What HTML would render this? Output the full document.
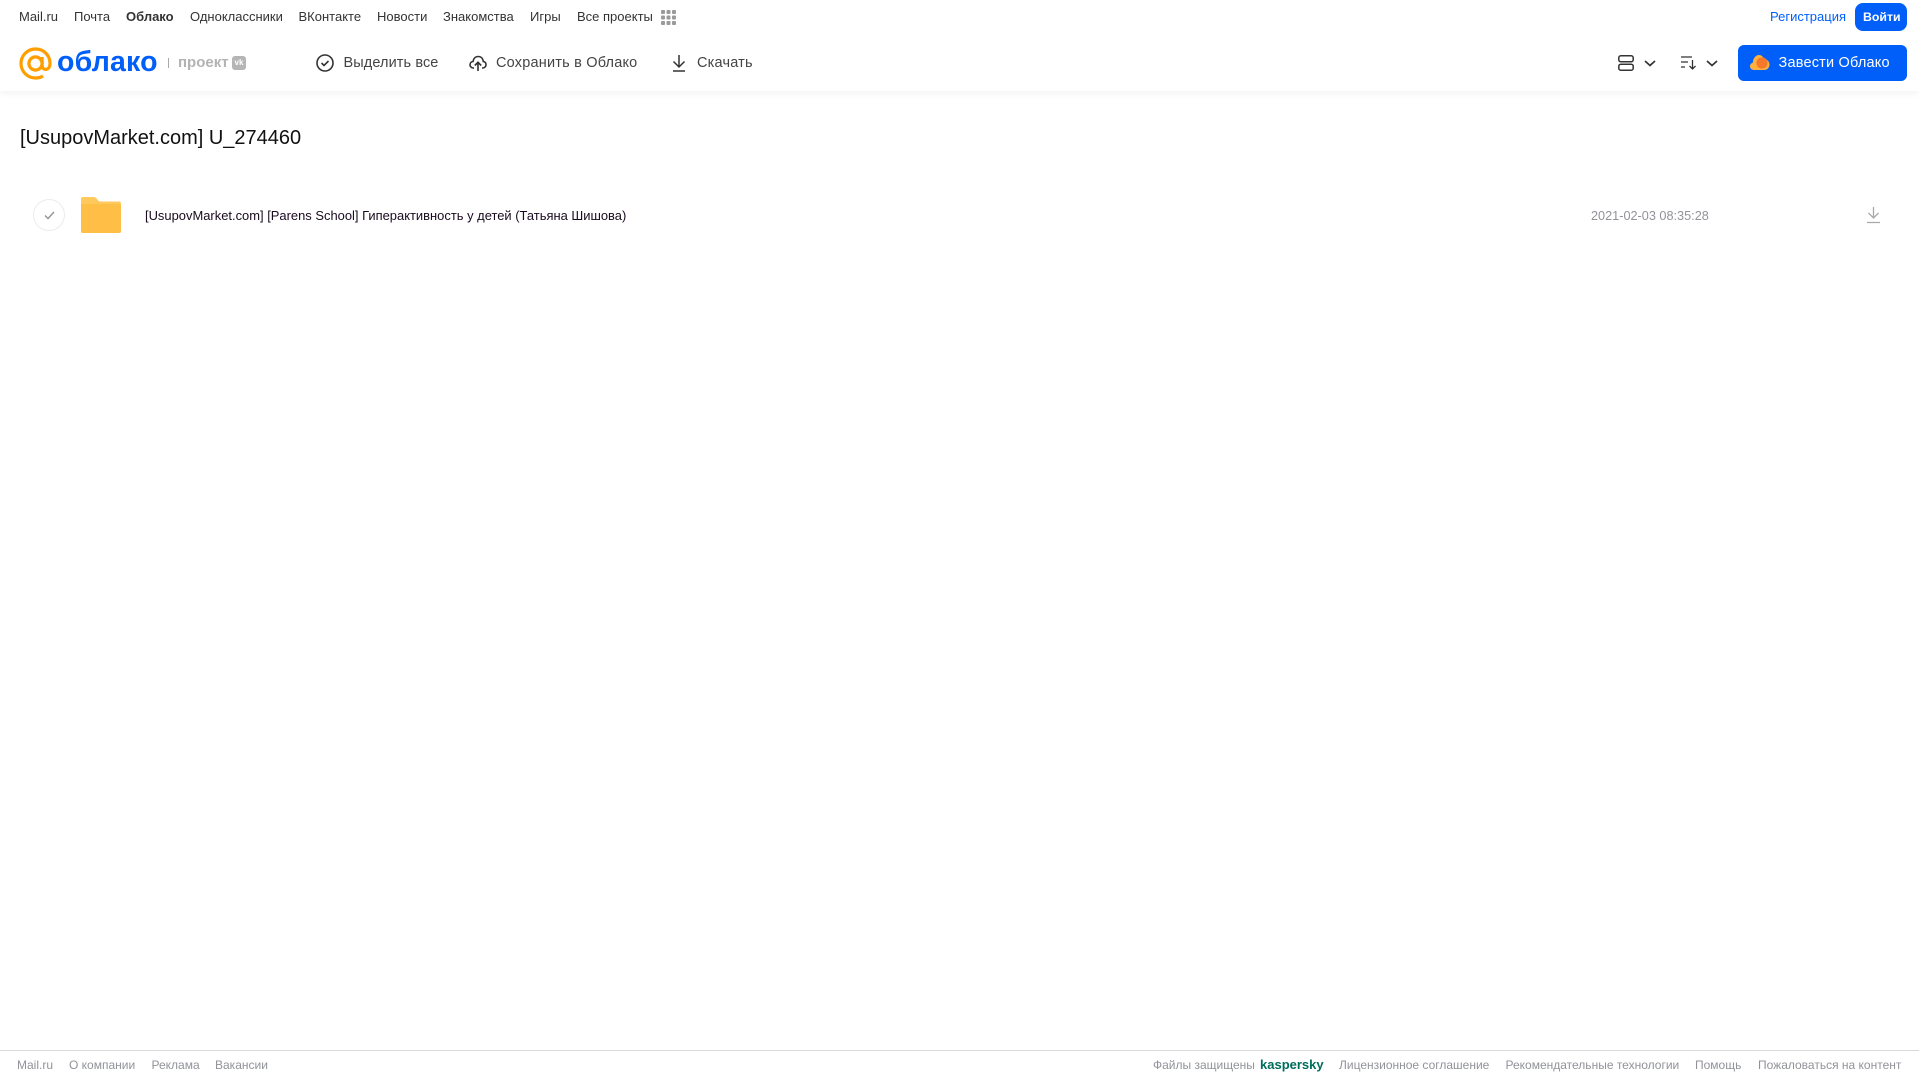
<!DOCTYPE html>
<html lang="ru"><head><meta charset="utf-8"><title>Облако</title>
<style>
html,body{margin:0;padding:0;background:#fff;width:1919px;height:1079px;overflow:hidden}
body{font-family:"Liberation Sans",sans-serif;position:relative}
.t{position:absolute;white-space:nowrap;line-height:20px;height:20px}
.n{top:7px;font-size:13px;color:#333}
.b{top:53px;font-size:14.5px;color:#444;letter-spacing:.1px}
.f{top:1055px;font-size:12px;color:#919399}
svg{position:absolute;overflow:visible}
</style></head><body>
<div style="position:absolute;left:0;top:0;width:1919px;height:91px;background:#fff;box-shadow:0 1px 8px rgba(0,0,0,.07)"></div>
<span class="t n" style="left:19px">Mail.ru</span>
<span class="t n" style="left:74px">Почта</span>
<span class="t n" style="left:126px;font-weight:bold">Облако</span>
<span class="t n" style="left:190px">Одноклассники</span>
<span class="t n" style="left:298.500px">ВКонтакте</span>
<span class="t n" style="left:377px">Новости</span>
<span class="t n" style="left:443px">Знакомства</span>
<span class="t n" style="left:530px">Игры</span>
<span class="t n" style="left:577px">Все проекты</span>
<svg style="left:661px;top:10px" width="15" height="15" fill="#9a9a9a"><rect width="4" height="4" rx="1"/><rect x="5.500" width="4" height="4" rx="1"/><rect x="11" width="4" height="4" rx="1"/><rect y="5.500" width="4" height="4" rx="1"/><rect x="5.500" y="5.500" width="4" height="4" rx="1"/><rect x="11" y="5.500" width="4" height="4" rx="1"/><rect y="11" width="4" height="4" rx="1"/><rect x="5.500" y="11" width="4" height="4" rx="1"/><rect x="11" y="11" width="4" height="4" rx="1"/></svg>
<span class="t n" style="left:1770px;color:#005ff9">Регистрация</span>
<div style="position:absolute;left:1855px;top:3px;width:52px;height:28px;border-radius:8px;background:#005ff9"></div>
<span class="t n" style="left:1863px;color:#fff;font-weight:bold;font-size:12.300px;top:7px">Войти</span>

<svg style="left:19px;top:47px" width="33" height="33" viewBox="0 0 33 33" fill="none" stroke="#ff9e00" stroke-width="3.200"><circle cx="16.500" cy="16.500" r="6.600"/><path d="M23.100 10v8.500c0 5.500 7.900 5.500 7.900-2C31 8 24.500 2 16.500 2S2 8.500 2 16.500 8.500 31 16.500 31c3 0 5.500-.7 7.500-2"/></svg>
<span class="t" style="left:57px;top:45px;height:34px;line-height:34px;font-size:28.500px;font-weight:bold;color:#005ff9;letter-spacing:.2px">облако</span>
<div style="position:absolute;left:168px;top:58px;width:1px;height:10px;background:#aaa"></div>
<span class="t" style="left:178px;top:53px;font-size:15px;font-weight:bold;color:#b3b3b3">проект</span>
<div style="position:absolute;left:232px;top:56px;width:14px;height:14px;border-radius:3px;background:#b5b5b5;color:#fff;font-size:8px;line-height:14px;text-align:center;font-weight:bold">vk</div>

<svg style="left:316px;top:54px" width="18" height="18" fill="none" stroke="#333" stroke-width="1.600"><circle cx="9" cy="9" r="8"/><path d="M5.500 9l2.500 2.500 4.500-4.500"/></svg>
<span class="t b" style="left:343.500px">Выделить все</span>
<svg style="left:469px;top:54px" width="18" height="18" fill="none" stroke="#333" stroke-width="1.600"><path d="M5 14H4.500C2.500 14 1 12.500 1 10.700 1 9 2.300 7.700 4 7.500 4.500 4.500 6.500 2.500 9.200 2.500 12 2.500 14 4.500 14.300 7.500 16 7.700 17 9 17 10.700 17 12.500 15.500 14 13.500 14H13"/><path d="M9 17V8.500M5.800 11.500L9 8.300l3.200 3.200"/></svg>
<span class="t b" style="left:496px;letter-spacing:.2px">Сохранить в Облако</span>
<svg style="left:672px;top:54px" width="14" height="18" fill="none" stroke="#333" stroke-width="1.500"><path d="M7 1v12M1.500 7.500L7 13l5.500-5.500M1 17h12"/></svg>
<span class="t b" style="left:697px;letter-spacing:.2px">Скачать</span>

<svg style="left:1618px;top:55px" width="16" height="16" fill="none" stroke="#333" stroke-width="1.500"><rect x=".8" y=".8" width="14.400" height="6" rx="2"/><rect x=".8" y="9.200" width="14.400" height="6" rx="2"/></svg>
<svg style="left:1644px;top:60px" width="12" height="7" fill="none" stroke="#333" stroke-width="1.700"><path d="M1 1l5 4.500L11 1"/></svg>
<svg style="left:1681px;top:56px" width="16" height="14" fill="none" stroke="#333" stroke-width="1.300"><path d="M0 1h11M0 6h7M0 11h4M11.500 4v9M8.500 10l3 3 3-3"/></svg>
<svg style="left:1706px;top:60px" width="12" height="7" fill="none" stroke="#333" stroke-width="1.700"><path d="M1 1l5 4.500L11 1"/></svg>
<div style="position:absolute;left:1738px;top:45px;width:169px;height:36px;border-radius:6px;background:#005ff9"></div>
<svg style="left:1750px;top:54px" width="20" height="17"><path d="M4 16C1.500 16 0 14.300 0 12.300 0 10.500 1.200 9.200 2.800 8.800 3 4 6 1 9 1c2.500 0 4 1.500 5 4 3 0 5.500 2.500 5.500 5.500 0 3-2 5.500-5.500 5.500z" fill="#ffb13d"/><circle cx="12" cy="9" r="5.600" fill="#f5792a"/></svg>
<span class="t b" style="left:1778.500px;color:#fff;letter-spacing:.2px">Завести Облако</span>

<span class="t" style="left:20px;top:124px;height:28px;line-height:28px;font-size:20.500px;color:#111;transform:scaleX(.975);transform-origin:0 50%">[UsupovMarket.com] U_274460</span>

<div style="position:absolute;left:33px;top:199px;width:30px;height:30px;border:1px solid #ececec;border-radius:50%"></div>
<svg style="left:43.500px;top:211px" width="11" height="9" fill="none" stroke="#8f8f8f" stroke-width="1.300"><path d="M1 4.500L4 7.500 10 1"/></svg>
<svg style="left:81px;top:197px" width="40" height="36"><path d="M2 0h10c2 0 3 .8 4 2l2 2.500h20c1.200 0 2 .8 2 2V34c0 1.200-.8 2-2 2H2c-1.200 0-2-.8-2-2V2C0 .8.800 0 2 0z" fill="#ffc95c"/><path d="M0 7h38c1.200 0 2 .8 2 2v25c0 1.200-.8 2-2 2H2c-1.200 0-2-.8-2-2z" fill="#ffbf47"/></svg>
<span class="t" style="left:144.500px;top:206px;font-size:13px;color:#1a0a1f;transform:scaleX(.995);transform-origin:0 50%">[UsupovMarket.com] [Parens School] Гиперактивность у детей (Татьяна Шишова)</span>
<span class="t" style="left:1591px;top:206px;font-size:12.700px;color:#919399">2021-02-03 08:35:28</span>
<svg style="left:1867px;top:206px" width="13" height="18" fill="none" stroke="#a8a8a8" stroke-width="1.300"><path d="M6.500 1v11M1.500 7l5 5 5-5M0 16.500h13"/></svg>

<div style="position:absolute;left:0;top:1050px;width:1919px;height:1px;background:#d9d9d9"></div>
<span class="t f" style="left:17px">Mail.ru</span>
<span class="t f" style="left:69px">О компании</span>
<span class="t f" style="left:151.500px">Реклама</span>
<span class="t f" style="left:215px">Вакансии</span>
<span class="t f" style="left:1153px">Файлы защищены</span>
<span class="t f" style="left:1260px;color:#006d5c;font-weight:bold;font-size:13px">kaspersky</span>
<span class="t f" style="left:1339px">Лицензионное соглашение</span>
<span class="t f" style="left:1505.500px">Рекомендательные технологии</span>
<span class="t f" style="left:1695px">Помощь</span>
<span class="t f" style="left:1758px">Пожаловаться на контент</span>
</body></html>
